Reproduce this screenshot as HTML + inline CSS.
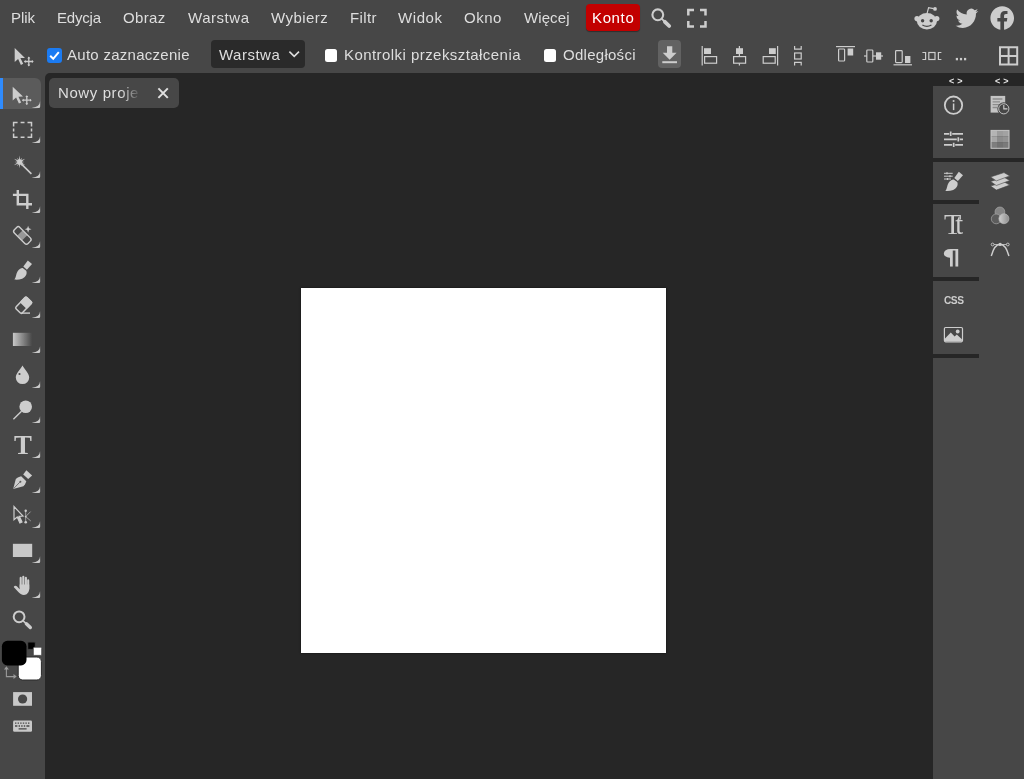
<!DOCTYPE html>
<html lang="pl"><head><meta charset="utf-8"><title>Photopea</title>
<style>
html,body{margin:0;padding:0;}
body{width:1024px;height:779px;overflow:hidden;background:#474747;position:relative;font-family:"Liberation Sans",sans-serif;}
.t{position:absolute;white-space:nowrap;line-height:20px;will-change:transform;}
.a{position:absolute;}
svg{position:absolute;left:0;top:0;}
</style></head><body>

<div class="a" style="left:45px;top:73px;width:979px;height:706px;background:#262626;border-top-left-radius:5px;"></div>
<div class="a" style="left:301px;top:288px;width:365px;height:365px;background:#fff;box-shadow:0 0 2px rgba(0,0,0,.6);"></div>
<div class="a" style="left:49px;top:78px;width:130px;height:30px;background:#474747;border-radius:5px;"></div>
<div class="t" style="left:58px;top:83px;width:81px;overflow:hidden;font-size:15px;color:#dedede;letter-spacing:0.6px;-webkit-mask-image:linear-gradient(90deg,#000 63px,transparent 83px);mask-image:linear-gradient(90deg,#000 63px,transparent 83px);">Nowy projekt</div>
<div class="a" style="left:933px;top:86px;width:91px;height:72px;background:#474747;"></div>
<div class="a" style="left:933px;top:162px;width:91px;height:617px;background:#474747;"></div>
<div class="a" style="left:933px;top:200px;width:46px;height:4px;background:#262626;"></div>
<div class="a" style="left:933px;top:277px;width:46px;height:4px;background:#262626;"></div>
<div class="a" style="left:933px;top:354px;width:46px;height:4px;background:#262626;"></div>
<div class="t" style="left:11.0px;top:8px;font-size:15px;color:#dedede;font-family:'Liberation Sans', sans-serif;font-weight:normal;letter-spacing:-0.023px;">Plik</div>
<div class="t" style="left:57.0px;top:8px;font-size:15px;color:#dedede;font-family:'Liberation Sans', sans-serif;font-weight:normal;letter-spacing:-0.206px;">Edycja</div>
<div class="t" style="left:123.25px;top:8px;font-size:15px;color:#dedede;font-family:'Liberation Sans', sans-serif;font-weight:normal;letter-spacing:0.348px;">Obraz</div>
<div class="t" style="left:187.8px;top:8px;font-size:15px;color:#dedede;font-family:'Liberation Sans', sans-serif;font-weight:normal;letter-spacing:0.537px;">Warstwa</div>
<div class="t" style="left:271.1px;top:8px;font-size:15px;color:#dedede;font-family:'Liberation Sans', sans-serif;font-weight:normal;letter-spacing:0.442px;">Wybierz</div>
<div class="t" style="left:349.5px;top:8px;font-size:15px;color:#dedede;font-family:'Liberation Sans', sans-serif;font-weight:normal;letter-spacing:0.400px;">Filtr</div>
<div class="t" style="left:398.25px;top:8px;font-size:15px;color:#dedede;font-family:'Liberation Sans', sans-serif;font-weight:normal;letter-spacing:0.578px;">Widok</div>
<div class="t" style="left:464.1px;top:8px;font-size:15px;color:#dedede;font-family:'Liberation Sans', sans-serif;font-weight:normal;letter-spacing:0.513px;">Okno</div>
<div class="t" style="left:523.75px;top:8px;font-size:15px;color:#dedede;font-family:'Liberation Sans', sans-serif;font-weight:normal;letter-spacing:0.096px;">Więcej</div>
<div class="a" style="left:586px;top:4px;width:54px;height:27px;background:#c20000;border-radius:4px;box-shadow:0 1px 1px rgba(0,0,0,.35);"></div>
<div class="t" style="left:591.5px;top:8px;font-size:15px;color:#fff;font-family:'Liberation Sans', sans-serif;font-weight:normal;letter-spacing:0.637px;">Konto</div>
<div class="a" style="left:47px;top:48px;width:15px;height:15px;background:#1b7bf2;border-radius:3px;"></div>
<div class="t" style="left:67px;top:45px;font-size:15px;color:#dedede;font-family:'Liberation Sans', sans-serif;font-weight:normal;letter-spacing:0.272px;">Auto zaznaczenie</div>
<div class="a" style="left:211px;top:40px;width:94px;height:28px;background:#2a2a2a;border-radius:4px;"></div>
<div class="t" style="left:218.5px;top:45px;font-size:15px;color:#dedede;font-family:'Liberation Sans', sans-serif;font-weight:normal;letter-spacing:0.495px;">Warstwa</div>
<div class="a" style="left:324.5px;top:49.3px;width:12.8px;height:12.8px;background:#fff;border-radius:2.5px;"></div>
<div class="t" style="left:344px;top:45px;font-size:15px;color:#dedede;font-family:'Liberation Sans', sans-serif;font-weight:normal;letter-spacing:0.441px;">Kontrolki przekształcenia</div>
<div class="a" style="left:543.5px;top:49.3px;width:12.8px;height:12.8px;background:#fff;border-radius:2.5px;"></div>
<div class="t" style="left:562.5px;top:45px;font-size:15px;color:#dedede;font-family:'Liberation Sans', sans-serif;font-weight:normal;letter-spacing:0.272px;">Odległości</div>
<div class="a" style="left:657.5px;top:40px;width:23px;height:28px;background:#626262;border-radius:4px;"></div>
<div class="a" style="left:0;top:78px;width:41px;height:31px;background:#5b5b5b;border-radius:0 6px 6px 0;"></div>
<div class="a" style="left:0;top:78px;width:3px;height:31px;background:#2f8cff;"></div>
<div class="t" style="left:13.7px;top:429.4px;font-size:26.8px;line-height:32px;color:#cdcdcd;font-family:'Liberation Serif',serif;font-weight:bold;">T</div>
<div class="t" style="left:943.8px;top:209.3px;font-size:28.4px;line-height:32px;color:#cdcdcd;font-family:'Liberation Serif',serif;letter-spacing:-6px;">Tt</div>
<div class="t" style="left:941.6px;top:242px;font-size:21.4px;line-height:32px;color:#cdcdcd;font-family:'DejaVu Sans',sans-serif;font-weight:bold;transform:scaleX(1.38);transform-origin:0 0;">¶</div>
<div class="t" style="left:943.5px;top:291.2px;font-size:10.2px;line-height:20px;color:#cdcdcd;font-weight:bold;letter-spacing:-0.5px;">CSS</div>
<div class="t" style="left:949px;top:71.3px;font-size:9px;line-height:20px;color:#e8e8e8;font-weight:bold;letter-spacing:3px;">&lt;&gt;</div>
<div class="t" style="left:995px;top:71.3px;font-size:9px;line-height:20px;color:#e8e8e8;font-weight:bold;letter-spacing:3px;">&lt;&gt;</div>
<svg width="1024" height="779" viewBox="0 0 1024 779" fill="#cdcdcd" stroke="none">
<g transform="translate(0,0)"><path d="M12.7 86.7 L12.7 100.6 L16.1 97.6 L18.9 103.6 L21.2 102.5 L18.4 96.8 L23 96.6 Z"/><path d="M26.8 96 V104.4 M22.6 100.2 H31" stroke="#cdcdcd" stroke-width="1.3" fill="none"/><path d="M26.8 95.3 l1.5 1.8 h-3z M26.8 105.1 l1.5 -1.8 h-3z M21.9 100.2 l1.8 -1.5 v3z M31.7 100.2 l-1.8 -1.5 v3z"/></g>
<g transform="translate(2,-38.7)"><path d="M12.7 86.7 L12.7 100.6 L16.1 97.6 L18.9 103.6 L21.2 102.5 L18.4 96.8 L23 96.6 Z"/><path d="M26.8 96 V104.4 M22.6 100.2 H31" stroke="#cdcdcd" stroke-width="1.3" fill="none"/><path d="M26.8 95.3 l1.5 1.8 h-3z M26.8 105.1 l1.5 -1.8 h-3z M21.9 100.2 l1.8 -1.5 v3z M31.7 100.2 l-1.8 -1.5 v3z"/></g>
<path transform="translate(0,0)" d="M32.2 107.9 L38.7 107.9 Q40.2 107.9 40.2 106.4 L40.1 101.2 Q39.7 106.9 32.2 107.7 Z" fill="#cacaca"/>
<path transform="translate(0,35)" d="M32.2 107.9 L38.7 107.9 Q40.2 107.9 40.2 106.4 L40.1 101.2 Q39.7 106.9 32.2 107.7 Z" fill="#cacaca"/>
<path transform="translate(0,70)" d="M32.2 107.9 L38.7 107.9 Q40.2 107.9 40.2 106.4 L40.1 101.2 Q39.7 106.9 32.2 107.7 Z" fill="#cacaca"/>
<path transform="translate(0,105)" d="M32.2 107.9 L38.7 107.9 Q40.2 107.9 40.2 106.4 L40.1 101.2 Q39.7 106.9 32.2 107.7 Z" fill="#cacaca"/>
<path transform="translate(0,140)" d="M32.2 107.9 L38.7 107.9 Q40.2 107.9 40.2 106.4 L40.1 101.2 Q39.7 106.9 32.2 107.7 Z" fill="#cacaca"/>
<path transform="translate(0,175)" d="M32.2 107.9 L38.7 107.9 Q40.2 107.9 40.2 106.4 L40.1 101.2 Q39.7 106.9 32.2 107.7 Z" fill="#cacaca"/>
<path transform="translate(0,210)" d="M32.2 107.9 L38.7 107.9 Q40.2 107.9 40.2 106.4 L40.1 101.2 Q39.7 106.9 32.2 107.7 Z" fill="#cacaca"/>
<path transform="translate(0,245)" d="M32.2 107.9 L38.7 107.9 Q40.2 107.9 40.2 106.4 L40.1 101.2 Q39.7 106.9 32.2 107.7 Z" fill="#cacaca"/>
<path transform="translate(0,280)" d="M32.2 107.9 L38.7 107.9 Q40.2 107.9 40.2 106.4 L40.1 101.2 Q39.7 106.9 32.2 107.7 Z" fill="#cacaca"/>
<path transform="translate(0,315)" d="M32.2 107.9 L38.7 107.9 Q40.2 107.9 40.2 106.4 L40.1 101.2 Q39.7 106.9 32.2 107.7 Z" fill="#cacaca"/>
<path transform="translate(0,350)" d="M32.2 107.9 L38.7 107.9 Q40.2 107.9 40.2 106.4 L40.1 101.2 Q39.7 106.9 32.2 107.7 Z" fill="#cacaca"/>
<path transform="translate(0,385)" d="M32.2 107.9 L38.7 107.9 Q40.2 107.9 40.2 106.4 L40.1 101.2 Q39.7 106.9 32.2 107.7 Z" fill="#cacaca"/>
<path transform="translate(0,420)" d="M32.2 107.9 L38.7 107.9 Q40.2 107.9 40.2 106.4 L40.1 101.2 Q39.7 106.9 32.2 107.7 Z" fill="#cacaca"/>
<path transform="translate(0,455)" d="M32.2 107.9 L38.7 107.9 Q40.2 107.9 40.2 106.4 L40.1 101.2 Q39.7 106.9 32.2 107.7 Z" fill="#cacaca"/>
<path transform="translate(0,490)" d="M32.2 107.9 L38.7 107.9 Q40.2 107.9 40.2 106.4 L40.1 101.2 Q39.7 106.9 32.2 107.7 Z" fill="#cacaca"/>
<g stroke="#cdcdcd" stroke-width="1.5" fill="none"><path d="M13.6 126.5 V122.5 H17.6 M20.6 122.5 H24.5 M27.5 122.5 H31.5 V126.5 M31.5 128.5 V131.5 M31.5 133.5 V137.3 H27.5 M24.5 137.3 H20.6 M17.6 137.3 H13.6 V133.5 M13.6 131.5 V128.5"/></g>
<polygon points="19.60,155.40 20.20,159.78 22.10,157.67 21.23,160.37 25.14,158.80 21.82,161.40 24.40,162.00 21.82,162.60 25.23,165.25 21.23,163.63 22.10,166.33 20.20,164.22 19.60,168.20 19.00,164.22 17.20,166.16 17.97,163.63 13.88,165.30 17.38,162.60 14.60,162.00 17.38,161.40 14.06,158.80 17.97,160.37 17.20,157.84 19.00,159.78"/>
<path d="M21 163.6 L31.4 173.9" stroke="#cdcdcd" stroke-width="1.5" fill="none"/>
<path d="M17.8 190 V204.3 H32 M12.9 194.9 H27.3 V209" stroke="#cdcdcd" stroke-width="2.4" fill="none"/>
<g transform="translate(22.35,235.4) rotate(45)"><rect x="-9.7" y="-3.9" width="19.4" height="7.8" rx="2.3" fill="none" stroke="#cdcdcd" stroke-width="1.4"/><rect x="-3.4" y="-3.6" width="6.8" height="7.2" fill="#cdcdcd" fill-opacity="0.6"/></g>
<path d="M28.1 225.7 L29 228.3 L31.5 229.2 L29 230.1 L28.1 232.7 L27.2 230.1 L24.7 229.2 L27.2 228.3 Z"/>
<path d="M27.8 260.4 L32 263.9 L26.9 269.7 L23.3 266.6 Z"/>
<path d="M22.7 268.1 L26.2 270.8 C27.6 273.6 25.6 277.4 22.2 278.7 C19.6 279.7 16.6 279.9 14.4 279.6 C16.2 277.6 15.9 274.2 17.5 271.6 C18.9 269.2 20.9 268 22.7 268.1 Z"/>
<g transform="translate(23.6,305.3) rotate(-46)"><rect x="-7.8" y="-4.3" width="15.6" height="8.6" rx="1.6" fill="none" stroke="#cdcdcd" stroke-width="1.5"/><rect x="-0.5" y="-5" width="9" height="10" rx="1.6"/></g>
<path d="M21.5 313.1 H30" stroke="#cdcdcd" stroke-width="1.4" fill="none"/>
<defs><linearGradient id="gr" x1="0" x2="1" y1="0" y2="0"><stop offset="0" stop-color="#c8c8c8"/><stop offset="1" stop-color="#c8c8c8" stop-opacity="0"/></linearGradient></defs>
<rect x="12.9" y="332.8" width="19.3" height="13.2" fill="url(#gr)"/>
<path d="M22.5 365.4 C20.3 369.6 15.8 373.2 15.8 377.4 A6.7 6.7 0 0 0 29.2 377.4 C29.2 373.2 24.7 369.6 22.5 365.4Z"/>
<circle cx="19.5" cy="374" r="1.1" fill="#4a4a4a"/>
<circle cx="25.7" cy="406.7" r="6.3"/>
<path d="M21.5 411.2 L13.4 419.2" stroke="#cdcdcd" stroke-width="1.4" fill="none"/>
<path d="M26.4 470.3 L32.1 475.4 L28.2 478.9 L23.2 474.4 Z"/>
<path d="M21.2 476.3 L26.3 481.2 C25.6 483.5 24.6 485 23.4 486.2 L13.2 489 L15.8 478.9 C17.4 477.6 19.2 476.8 21.2 476.3 Z"/>
<path d="M13.6 488.6 L19.8 482.2" stroke="#5a5a5a" stroke-width="0.8" fill="none"/><circle cx="20.4" cy="481.7" r="1" fill="#5a5a5a"/>
<path d="M14 506.6 L14 519.8 L17.2 517 L19.9 523 L22 522 L19.3 516.3 L23 516 Z" fill="none" stroke="#cdcdcd" stroke-width="1.2"/><path d="M17.2 517 L19.9 523 L22 522 L19.3 516.3 Z"/>
<path d="M25.7 511 V522 M25.7 516.6 L30.6 511.6 M25.7 516.6 L30.8 521" stroke="#a8a8a8" stroke-width="0.9" fill="none"/>
<circle cx="25.7" cy="510.8" r="1.2"/><circle cx="25.7" cy="522.3" r="1.3"/><circle cx="25.7" cy="516.6" r="0.9"/>
<rect x="12.9" y="543.8" width="19.3" height="13.2" fill="#c8c8c8"/>
<path d="M20.7 577.9 V587 M23.3 576.8 V587 M25.9 577.9 V587 M28.2 580.4 V589" stroke="#cdcdcd" stroke-width="2.1" stroke-linecap="round" fill="none"/>
<path d="M19.65 584.5 H29.25 V588.5 C29.25 592.3 27 594.9 24 594.9 C21.6 594.9 19.7 593.7 18.1 591.7 L13.7 586.9 C14.5 585.5 16 585.5 17.1 586.6 L19.65 589.2 Z"/>
<circle cx="19.1" cy="616.8" r="5.4" fill="none" stroke="#cdcdcd" stroke-width="2"/>
<path d="M22.9 620.6 L26.5 624" stroke="#cdcdcd" stroke-width="1.6" fill="none"/>
<path d="M26.4 623.8 L30.3 627.5" stroke="#cdcdcd" stroke-width="3.4" stroke-linecap="round" fill="none"/>
<rect x="27.7" y="642" width="7.6" height="7.4" rx="1" fill="#000" stroke="#444" stroke-width="1"/>
<rect x="33.3" y="647.2" width="8.4" height="8.2" rx="1.2" fill="#fff" stroke="#444" stroke-width="0.8"/>
<rect x="18.2" y="657" width="23.2" height="23" rx="4.5" fill="#fff" stroke="#2a2a2a" stroke-width="1"/>
<rect x="1.9" y="640.8" width="24.6" height="24.6" rx="5.5" fill="#000"/>
<path d="M6.4 668.5 V676.6 H14" stroke="#9a9a9a" stroke-width="1.1" fill="none"/>
<path d="M6.4 666.2 L8.9 669.4 H3.9 Z M16.7 676.6 L13.5 674.1 V679.1 Z" fill="#9a9a9a"/>
<rect x="13.1" y="692.1" width="18.9" height="13.7" fill="#c8c8c8"/><circle cx="22.6" cy="699" r="4.6" fill="#474747"/>
<rect x="13.1" y="720.6" width="18.9" height="11.1" rx="1.3" fill="#c8c8c8"/>
<path d="M15 723.2 h1.4 M17.6 723.2 h1.4 M20.2 723.2 h1.4 M22.8 723.2 h1.4 M25.4 723.2 h1.4 M28 723.2 h1.4 M15 726 h2.4 M18.6 726 h1.4 M21.2 726 h1.4 M23.8 726 h1.4 M26.4 726 h3 M18.6 728.9 h8" stroke="#474747" stroke-width="1.3" fill="none"/>
<circle cx="657.8" cy="14.8" r="5.4" fill="none" stroke="#cdcdcd" stroke-width="2.1"/>
<path d="M661.6 18.7 L665 22" stroke="#cdcdcd" stroke-width="1.8" fill="none"/>
<path d="M664.9 21.8 L669.2 26" stroke="#cdcdcd" stroke-width="3.8" stroke-linecap="round" fill="none"/>
<path d="M688.3 15.6 V10 H694 M700 10 H705.5 V15.6 M705.5 21 V26.6 H700 M694 26.6 H688.3 V21" stroke="#cdcdcd" stroke-width="2.5" fill="none"/>
<path d="M289.4 51.6 L294.2 56.3 L299 51.6" stroke="#dedede" stroke-width="1.6" fill="none"/>
<path d="M50.2 55.8 L53.2 58.8 L58.8 52.1" stroke="#fff" stroke-width="2" fill="none"/>
<path d="M667 46.3 H672.3 V52.8 H676.6 L669.65 59.8 L662.7 52.8 H667 Z"/><rect x="662.3" y="61.2" width="14.7" height="2"/>
<path d="M702.2 46 V65.6" stroke="#cdcdcd" stroke-width="1.2" fill="none"/><rect x="704" y="48.2" width="7" height="5.8"/><rect x="704.6" y="56.6" width="12" height="6.6" stroke="#cdcdcd" stroke-width="1.2" fill="none"/>
<path d="M739.4 46 V65.6" stroke="#cdcdcd" stroke-width="1.2" fill="none"/><rect x="736" y="48.2" width="7" height="5.8"/><rect x="733.6" y="56.6" width="12" height="6.6" fill="#474747" stroke="#cdcdcd" stroke-width="1.2"/>
<path d="M777.6 46 V65.6" stroke="#cdcdcd" stroke-width="1.2" fill="none"/><rect x="769" y="48.2" width="6.8" height="5.8"/><rect x="763.2" y="56.6" width="12" height="6.6" stroke="#cdcdcd" stroke-width="1.2" fill="none"/>
<path d="M794.6 46 V49.2 H801.2 V46 M794.6 65.4 V62.4 H801.2 V65.4" stroke="#cdcdcd" stroke-width="1.2" fill="none"/><rect x="794.6" y="53" width="6.6" height="6" stroke="#cdcdcd" stroke-width="1.2" fill="none"/>
<path d="M836 46.6 H855" stroke="#cdcdcd" stroke-width="1.2" fill="none"/><rect x="838.6" y="49" width="6" height="12" rx="0.8" stroke="#cdcdcd" stroke-width="1.2" fill="none"/><rect x="847.6" y="48.5" width="5.6" height="7"/>
<path d="M864 56 H883" stroke="#cdcdcd" stroke-width="1.2" fill="none"/><rect x="866.8" y="50" width="6" height="12" rx="0.8" fill="#474747" stroke="#cdcdcd" stroke-width="1.2"/><rect x="876" y="52.3" width="5.2" height="7.4"/>
<path d="M893.5 64.8 H912" stroke="#cdcdcd" stroke-width="1.2" fill="none"/><rect x="895.6" y="50.6" width="6.6" height="12" rx="0.8" stroke="#cdcdcd" stroke-width="1.2" fill="none"/><rect x="905" y="56" width="5.4" height="7"/>
<path d="M922.4 52.5 H925.6 V59.5 H922.4 M941.4 52.5 H938.4 V59.5 H941.4" stroke="#cdcdcd" stroke-width="1.2" fill="none"/><rect x="928.8" y="52.5" width="6.2" height="7" stroke="#cdcdcd" stroke-width="1.2" fill="none"/>
<rect x="955.8" y="57.9" width="2.2" height="2.4"/><rect x="959.9" y="57.9" width="2.2" height="2.4"/><rect x="964" y="57.9" width="2.2" height="2.4"/>
<path d="M1000 47.3 H1017.2 V64.6 H1000 Z M1008.6 47.3 V64.6 M1000 55.9 H1017.2" stroke="#cdcdcd" stroke-width="2" fill="none"/>
<g><ellipse cx="926.9" cy="21.3" rx="10" ry="8.2"/><circle cx="917" cy="18.6" r="2.6"/><circle cx="936.8" cy="18.6" r="2.6"/><path d="M927 13.6 L928.6 7.6 L933.6 8.7" stroke="#cdcdcd" stroke-width="1.2" fill="none"/><circle cx="935" cy="8.9" r="1.9"/><circle cx="922.6" cy="20.8" r="1.7" fill="#474747"/><circle cx="931.2" cy="20.8" r="1.7" fill="#474747"/><path d="M922.4 25 Q926.9 27.6 931.4 25" stroke="#474747" stroke-width="1.2" fill="none"/></g>
<path transform="translate(955.6,6.4) scale(0.945,0.99)" d="M23.953 4.57a10 10 0 01-2.825.775 4.958 4.958 0 002.163-2.723c-.951.555-2.005.959-3.127 1.184a4.92 4.92 0 00-8.384 4.482C7.69 8.095 4.067 6.13 1.64 3.162a4.822 4.822 0 00-.666 2.475c0 1.71.87 3.213 2.188 4.096a4.904 4.904 0 01-2.228-.616v.06a4.923 4.923 0 003.946 4.827 4.996 4.996 0 01-2.212.085 4.936 4.936 0 004.604 3.417 9.867 9.867 0 01-6.102 2.105c-.39 0-.779-.023-1.17-.067a13.995 13.995 0 007.557 2.209c9.053 0 13.998-7.496 13.998-13.985 0-.21 0-.42-.015-.63A9.935 9.935 0 0024 4.59z"/>
<path transform="translate(990.4,6.2) scale(0.985)" d="M24 12.073c0-6.627-5.373-12-12-12s-12 5.373-12 12c0 5.99 4.388 10.954 10.125 11.854v-8.385H7.078v-3.47h3.047V9.43c0-3.007 1.792-4.669 4.533-4.669 1.312 0 2.686.235 2.686.235v2.953H15.83c-1.491 0-1.956.925-1.956 1.874v2.25h3.328l-.532 3.47h-2.796v8.385C19.612 23.027 24 18.062 24 12.073z"/>
<circle cx="953.5" cy="105.2" r="8.7" fill="none" stroke="#cdcdcd" stroke-width="1.8"/>
<circle cx="953.6" cy="101" r="1.05"/><path d="M953.6 103.5 V110.1" stroke="#cdcdcd" stroke-width="1.5" fill="none"/>
<rect x="990.6" y="95.9" width="14.6" height="16.7" fill="#c4c4c4"/>
<path d="M992.6 99 H1002.4 M992.6 101.9 H1000 M992.6 104.7 H998.6 M992.6 107.5 H997.4" stroke="#8c8c8c" stroke-width="1.3" fill="none"/>
<circle cx="1003.8" cy="108.8" r="6.5" fill="#474747"/>
<circle cx="1003.8" cy="108.8" r="5.1" fill="#474747" stroke="#c4c4c4" stroke-width="1"/>
<path d="M1003.8 105 V108.9 H1007.4" stroke="#d0d0d0" stroke-width="1.1" fill="none"/>
<path d="M944 133.8 H949.3 M952.2 133.8 H963 M944 139.4 H956.8 M959.8 139.4 H963 M944 144.9 H952.2 M955.2 144.9 H963" stroke="#cdcdcd" stroke-width="1.7" fill="none"/>
<path d="M950.7 131.6 V136 M958.3 137.2 V141.6 M953.7 142.7 V147.1" stroke="#cdcdcd" stroke-width="1.7" fill="none"/>
<rect x="991.0" y="130.4" width="6.1" height="6.1" fill="#b4b4b4"/>
<rect x="997.0" y="130.4" width="6.1" height="6.1" fill="#9c9c9c"/>
<rect x="1003.0" y="130.4" width="6.1" height="6.1" fill="#a2a2a2"/>
<rect x="991.0" y="136.4" width="6.1" height="6.1" fill="#a6a6a6"/>
<rect x="997.0" y="136.4" width="6.1" height="6.1" fill="#8c8c8c"/>
<rect x="1003.0" y="136.4" width="6.1" height="6.1" fill="#929292"/>
<rect x="991.0" y="142.4" width="6.1" height="6.1" fill="#7e7e7e"/>
<rect x="997.0" y="142.4" width="6.1" height="6.1" fill="#727272"/>
<rect x="1003.0" y="142.4" width="6.1" height="6.1" fill="#7a7a7a"/>
<rect x="991" y="130.4" width="18" height="17.9" fill="none" stroke="#c6c6c6" stroke-width="1"/>
<g transform="translate(931,-88.7)"><path d="M27.8 260.4 L32 263.9 L26.9 269.7 L23.3 266.6 Z"/><path d="M22.7 268.1 L26.2 270.8 C27.6 273.6 25.6 277.4 22.2 278.7 C19.6 279.7 16.6 279.9 14.4 279.6 C16.2 277.6 15.9 274.2 17.5 271.6 C18.9 269.2 20.9 268 22.7 268.1 Z"/></g>
<path d="M944 173.3 H952.7 M944 176.2 H952.7 M944 179 H951" stroke="#cdcdcd" stroke-width="1" fill="none"/>
<path d="M947 172.3 v2 M950 175.2 v2 M947.5 178 v2" stroke="#cdcdcd" stroke-width="1.2" fill="none"/>
<path transform="translate(0,9.2)" d="M990.6 176.9 L1004 172.6 L1009.8 175.9 L996.3 180.9 Z" stroke="#474747" stroke-width="0.6"/>
<path transform="translate(0,4.6)" d="M990.6 176.9 L1004 172.6 L1009.8 175.9 L996.3 180.9 Z" stroke="#474747" stroke-width="0.6"/>
<path transform="translate(0,0)" d="M990.6 176.9 L1004 172.6 L1009.8 175.9 L996.3 180.9 Z" stroke="#474747" stroke-width="0.6"/>
<defs><linearGradient id="ch" x1="0" x2="1" y1="0" y2="0"><stop offset="0" stop-color="#cfcfcf"/><stop offset="1" stop-color="#8e8e8e"/></linearGradient></defs>
<circle cx="999.9" cy="211.9" r="4.9" fill="#858585" stroke="#a8a8a8" stroke-width="0.7"/>
<circle cx="996.2" cy="218.9" r="4.9" fill="#5c5c5c" stroke="#a8a8a8" stroke-width="0.7"/>
<circle cx="1003.9" cy="218.7" r="5" fill="url(#ch)" stroke="#b8b8b8" stroke-width="0.7"/>
<path d="M991.3 256 C993.5 248 996.5 244.3 1000.1 244.3 C1003.7 244.3 1006.7 248 1008.9 256" stroke="#cdcdcd" stroke-width="1.5" fill="none"/>
<path d="M994 244.5 H1006.4" stroke="#cdcdcd" stroke-width="0.8" fill="none"/>
<circle cx="992.6" cy="244.5" r="1.4" fill="none" stroke="#cdcdcd" stroke-width="0.9"/><circle cx="1007.8" cy="244.5" r="1.4" fill="none" stroke="#cdcdcd" stroke-width="0.9"/><circle cx="1000.1" cy="244.4" r="1.7"/>
<rect x="944.4" y="327.5" width="18.1" height="14.3" rx="1.2" fill="none" stroke="#cdcdcd" stroke-width="1.2"/>
<path d="M945 341.2 V338.5 L950.8 332.6 L954.6 336.4 L956.8 334.6 L961.9 339.2 V341.2 Z"/><circle cx="957.7" cy="331.5" r="1.9"/>
<path d="M158.4 88.4 L167.8 97.9 M167.8 88.4 L158.4 97.9" stroke="#e0e0e0" stroke-width="2" fill="none"/>
</svg>
</body></html>
